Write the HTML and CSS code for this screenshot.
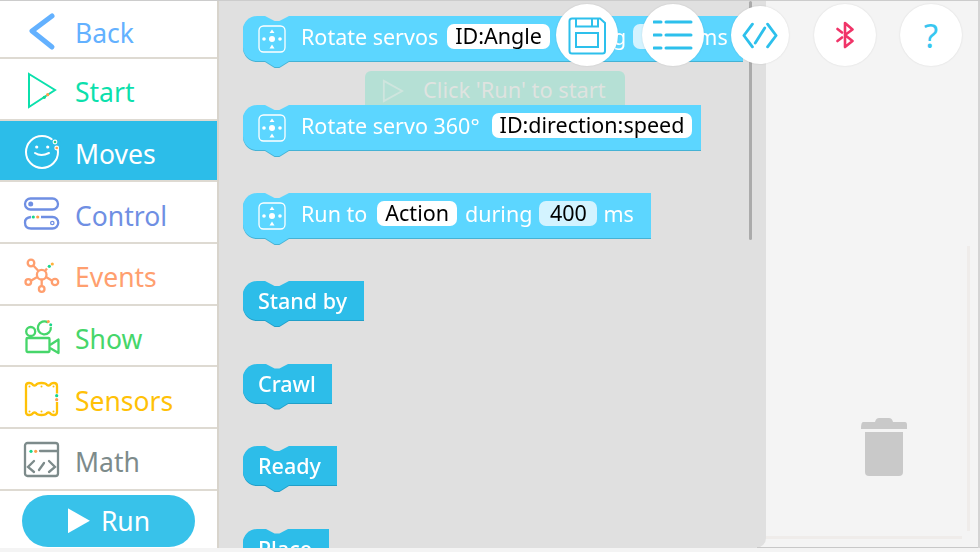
FILE: index.html
```html
<!DOCTYPE html>
<html lang="en">
<head>
  <meta charset="UTF-8" />
  <title>Blocks</title>
  <link rel="stylesheet" href="styles.css">
</head>
<body>

<div class="app">
  <nav class="sidebar">
    <a class="nav-item nav-back">
      <svg class="nav-icon" viewBox="0 0 40 40"><path d="M30 5 L10 20 L30 36" fill="none" stroke="currentColor" stroke-width="5" stroke-linecap="round" stroke-linejoin="round"/></svg>
      <span class="nav-label">Back</span>
    </a>
    <a class="nav-item nav-start">
      <svg class="nav-icon" viewBox="0 0 40 40"><path d="M7 4 L33 20 L7 37 Z" fill="none" stroke="currentColor" stroke-width="2"/><circle cx="22.3" cy="27.3" r="1.6" fill="#19d68c"/><circle cx="25.7" cy="24.7" r="1.6" fill="#ff9f4a"/></svg>
      <span class="nav-label">Start</span>
    </a>
    <a class="nav-item nav-moves">
      <svg class="nav-icon" viewBox="0 0 40 40"><circle cx="20" cy="20" r="16" fill="none" stroke="#fff" stroke-width="2"/><circle cx="14.7" cy="15" r="1.6" fill="#fff"/><circle cx="25.7" cy="15" r="1.6" fill="#fff"/><path d="M13 21 Q19 25 27 21" fill="none" stroke="#fff" stroke-width="2" stroke-linecap="round"/><circle cx="33.5" cy="12" r="5.5" fill="#2cbde9"/><circle cx="33" cy="10" r="2.4" fill="#fff"/><circle cx="33" cy="10" r="1.3" fill="#2fd08a"/><circle cx="34.7" cy="16" r="2.4" fill="#fff"/><circle cx="34.7" cy="16" r="1.3" fill="#ff9f4a"/></svg>
      <span class="nav-label">Moves</span>
    </a>
    <a class="nav-item nav-control">
      <svg class="nav-icon" viewBox="0 0 40 40"><rect x="3" y="4.5" width="33" height="11" rx="5.5" fill="none" stroke="currentColor" stroke-width="2.3"/><circle cx="8.7" cy="10" r="2.5" fill="currentColor"/><path d="M9 23 Q3 23.5 3 28.5 Q3 34.5 9 34.5 H30.5 A5.7 5.7 0 0 0 30.5 23 H19" fill="none" stroke="currentColor" stroke-width="2.3"/><circle cx="30.3" cy="29" r="1.7" fill="none" stroke="currentColor" stroke-width="1.3"/><circle cx="11.3" cy="23" r="1.6" fill="#19d68c"/><circle cx="15.7" cy="23" r="1.6" fill="#ff9f4a"/></svg>
      <span class="nav-label">Control</span>
    </a>
    <a class="nav-item nav-events">
      <svg class="nav-icon" viewBox="0 0 40 40"><g fill="none" stroke="currentColor" stroke-width="2.3"><circle cx="19.7" cy="19.7" r="4.8"/><circle cx="9" cy="8" r="3.3"/><circle cx="6.3" cy="27" r="2.8"/><circle cx="33" cy="27" r="3.2"/><circle cx="19.7" cy="34" r="2.8"/><path d="M11.3 10.5 L16.5 16 M8.8 25.8 L15.3 22 M24 22 L30.2 25.8 M19.7 24.5 V31.2 M23 16 L25 13.5"/></g><circle cx="27.3" cy="11.3" r="1.6" fill="#19d68c"/><circle cx="30.3" cy="9" r="1.6" fill="#ffb13d"/></svg>
      <span class="nav-label">Events</span>
    </a>
    <a class="nav-item nav-show">
      <svg class="nav-icon" viewBox="0 0 40 40"><g fill="none" stroke="currentColor" stroke-width="2.3" stroke-linejoin="round"><rect x="4.5" y="21" width="23" height="14" rx="1"/><path d="M28 28 L36.5 22.5 V36 L28 31"/><circle cx="8.7" cy="14.5" r="4.5"/><path d="M26 5.5 A6.5 6.5 0 1 0 28.8 10"/></g><circle cx="26.3" cy="4.5" r="1.5" fill="#ff9f4a"/><circle cx="28.7" cy="7.7" r="1.5" fill="#19d68c"/></svg>
      <span class="nav-label">Show</span>
    </a>
    <a class="nav-item nav-sensors">
      <svg class="nav-icon" viewBox="0 0 40 40"><path d="M4 7 Q4 4 7 4 Q10 4 11 6 Q12.5 7 14 6 Q15 4 19.5 4 Q24 4 25 6 Q26.5 7 28 6 Q29 4 32 4 Q35 4 35 7 V33 Q35 36 32 36 Q29 36 28 34 Q26.5 33 25 34 Q24 36 19.5 36 Q15 36 14 34 Q12.5 33 11 34 Q10 36 7 36 Q4 36 4 33 Z" fill="none" stroke="currentColor" stroke-width="2.3"/><g fill="currentColor"><circle cx="7.5" cy="7.5" r="1"/><circle cx="19.5" cy="7.5" r="1"/><circle cx="31.5" cy="7.5" r="1"/><circle cx="7.5" cy="32.5" r="1"/><circle cx="19.5" cy="32.5" r="1"/><circle cx="31.5" cy="32.5" r="1"/></g><rect x="33" y="14.5" width="4" height="8.5" fill="#fff"/><circle cx="34.7" cy="16.7" r="1.6" fill="#19d68c"/><circle cx="34.7" cy="20.7" r="1.6" fill="#ff9f4a"/></svg>
      <span class="nav-label">Sensors</span>
    </a>
    <a class="nav-item nav-math">
      <svg class="nav-icon" viewBox="0 0 40 40"><g fill="none" stroke="currentColor" stroke-width="2.3" stroke-linecap="round"><rect x="3" y="3" width="33" height="33" rx="2.5"/><path d="M18 11 H36 M12 21 L6 27 L12 32 M27 21 L33 27 L27 32 M17 30 L22 23"/></g><circle cx="9" cy="11.3" r="1.6" fill="#19d68c"/><circle cx="13.7" cy="11.3" r="1.6" fill="#ff9f4a"/></svg>
      <span class="nav-label">Math</span>
    </a>
    <div class="run-wrap">
      <button class="run-btn"><span class="run-arrow"></span>Run</button>
    </div>
  </nav>

  <main class="stage">
    <section class="flyout">
      <div class="hint">
        <svg class="hint-icon" viewBox="0 0 24 26"><path d="M2 2 L22 13 L2 24 Z" fill="none" stroke="#cfe5de" stroke-width="2"/></svg>
        Click 'Run' to start
      </div>
      <div class="scrollbar"></div>

      <div class="block block-light block-first">
        <svg class="block-icon" viewBox="0 0 28 28"><use href="#move-icon"/></svg>
        <span>Rotate servos</span>
        <span class="field">ID:Angle</span>
        <span>during</span>
        <span class="field field-num">400</span>
        <span>ms</span>
      </div>
      <div class="block block-light block-second">
        <svg class="block-icon" viewBox="0 0 28 28"><use href="#move-icon"/></svg>
        <span class="label-wide">Rotate servo 360°</span>
        <span class="field">ID:direction:speed</span>
      </div>
      <div class="block block-light block-third">
        <svg class="block-icon" viewBox="0 0 28 28"><use href="#move-icon"/></svg>
        <span class="label-run">Run to</span>
        <span class="field field-action">Action</span>
        <span>during</span>
        <span class="field field-num">400</span>
        <span>ms</span>
      </div>
      <div class="block block-dark block-standby">Stand by</div>
      <div class="block block-dark block-crawl">Crawl</div>
      <div class="block block-dark block-ready">Ready</div>
      <div class="block block-dark block-place">Place</div>
    </section>

    <div class="toolbar">
      <button class="tool-btn">
        <svg viewBox="0 0 40 40" width="40" height="40"><g fill="none" stroke="#2dc0ec" stroke-width="2"><path d="M5 3.5 H33 L38 8 V36 Q38 38.5 35.5 38.5 H5 Q2.5 38.5 2.5 36 V6 Q2.5 3.5 5 3.5 Z"/><path d="M9 3.5 V11.5 H31 V3.5 M9 18 H31 V32 H9 Z M25 4 V11"/></g></svg>
      </button>
      <button class="tool-btn">
        <svg viewBox="0 0 40 32" width="40" height="32"><path d="M1 3 H8 M13 3 H38 M1 16 H8 M13 16 H38 M1 29 H8 M13 29 H38" fill="none" stroke="#2dc0ec" stroke-width="3" stroke-linecap="round"/></svg>
      </button>
      <button class="tool-btn tool-small">
        <svg viewBox="0 0 38 28" width="36" height="27"><path d="M11 2 L2 14 L11 26 M27 2 L36 14 L27 26 M14 22 L24 6" fill="none" stroke="#2dc0ec" stroke-width="3" stroke-linecap="round" stroke-linejoin="round"/></svg>
      </button>
      <button class="tool-btn">
        <svg viewBox="0 0 18 28" width="18" height="28"><path d="M9 2 L16.5 8.5 L9 14 L16.5 20 L9 26 Z" fill="none" stroke="#f03468" stroke-width="2.6" stroke-linejoin="round"/><path d="M1.5 8 L6 11.5 M1.5 20 L6 16.5" fill="none" stroke="#f03468" stroke-width="2.6" stroke-linecap="round"/></svg>
      </button>
      <button class="tool-btn tool-help">?</button>
    </div>

    <svg class="trash" viewBox="0 0 46 58" width="46" height="58"><path d="M0 11 Q0 4 2 4 H14 Q15 0 18 0 H28 Q31 0 32 4 H44 Q46 4 46 7 V11 Z" fill="#c9c9c9"/><path d="M4 14 H42 V54 Q42 58 38 58 H8 Q4 58 4 54 Z" fill="#c9c9c9"/></svg>
    <div class="track-v"></div>
    <div class="track-h"></div>
  </main>
</div>

<svg class="defs" width="0" height="0">
  <symbol id="move-icon" viewBox="0 0 28 28">
    <rect x="1" y="1" width="26" height="26" rx="4.5" fill="none" stroke="#fff" stroke-width="1.3"/>
    <circle cx="14" cy="14" r="3" fill="#fff"/>
    <circle cx="6" cy="14" r="1.8" fill="#fff"/>
    <circle cx="22" cy="14" r="1.8" fill="#fff"/>
    <path d="M14 4.5 L16.5 8 H11.5 Z M14 19.5 L16.5 23.5 H11.5 Z" fill="#fff"/>
  </symbol>
</svg>

</body>
</html>
```

FILE: styles.css
```css
* {
  box-sizing: border-box;
}

body {
  margin: 0;
  font-family: "Noto Sans", "Open Sans", sans-serif;
  background: #f4f4f4;
  overflow: hidden;
}

.defs {
  display: block;
}

.app {
  display: flex;
  width: 980px;
  height: 548px;
  overflow: hidden;
  border-top: 1px solid #cccccc;
}

.sidebar {
  width: 219px;
  flex: none;
  background: white;
  border-right: 2px solid #d8d4cc;
}

.nav-item {
  display: flex;
  align-items: center;
  height: 61.7px;
  padding: 3px 0 0 22px;
  font-size: 26.5px;
  border-bottom: 2px solid #dedad2;
}

.nav-back { height: 58px; color: #63b1ff; }
.nav-start { color: #0be0ac; }
.nav-moves { color: white; background: #2cbde9; }
.nav-control { color: #6f8fe3; }
.nav-events { color: #ff9f6f; }
.nav-show { color: #46d66a; }
.nav-sensors { color: #ffc107; }
.nav-math { color: #7d8b8b; }

.nav-icon {
  width: 40px;
  height: 40px;
  margin-right: 13px;
  flex: none;
}

.nav-label {
  padding-top: 4px;
}

.run-wrap {
  padding: 4px 0 0 22px;
}

.run-btn {
  display: flex;
  align-items: center;
  justify-content: center;
  width: 173px;
  height: 52px;
  border: none;
  border-radius: 26px;
  background: #38c2ea;
  color: white;
  font-family: inherit;
  font-size: 26.5px;
  padding: 0 0 0 1px;
}

.run-arrow {
  width: 22px;
  height: 25px;
  margin-right: 11px;
  background: white;
  clip-path: polygon(0 0, 100% 50%, 0 100%);
}

.stage {
  position: relative;
  flex: 1;
  height: 100%;
  border-right: 2px solid #d4d4d4;
}

/* thin frame line under the workspace, starts where the flyout corner ends */
.stage::after {
  content: "";
  position: absolute;
  left: 538px;
  right: 0;
  bottom: 0;
  height: 1px;
  background: #c8c8c8;
}

.flyout {
  position: relative;
  width: 547px;
  height: 100%;
  padding: 15px 0 0 24px;
  background: #e0e0e0;
  border-bottom-right-radius: 10px;
  overflow: hidden;
}

.hint {
  position: absolute;
  left: 146px;
  top: 70px;
  width: 260px;
  height: 50px;
  display: flex;
  align-items: flex-start;
  padding: 4px 0 0 17px;
  background: #b5e0d5;
  border-radius: 6px;
  color: #dfe3e0;
  font-size: 21.8px;
}

.hint-icon {
  width: 22px;
  height: 24px;
  margin: 4px 19px 0 0;
}

.scrollbar {
  position: absolute;
  left: 530px;
  top: 0;
  width: 3px;
  height: 239px;
  border-radius: 2px;
  background: #ababab;
}

.block {
  position: relative;
  display: flex;
  align-items: center;
  width: fit-content;
  color: white;
  font-size: 21.5px;
  white-space: nowrap;
  border-radius: 14px 0 0 14px;
  filter: drop-shadow(0.5px 1.5px 0 #45b2d4);
}

.block::before {
  content: "";
  position: absolute;
  left: 22px;
  top: 0;
  width: 24px;
  height: 5px;
  background: #e0e0e0;
  clip-path: polygon(0 0, 100% 0, 60% 100%, 40% 100%);
}

.block::after {
  content: "";
  position: absolute;
  left: 22px;
  bottom: -6px;
  width: 24px;
  height: 6px;
  clip-path: polygon(0 0, 100% 0, 60% 100%, 40% 100%);
}

.block-light {
  height: 45px;
  padding-left: 15px;
  background: #5cd6ff;
  margin-bottom: 43px;
}

.block-light::after { background: #5cd6ff; }

.block-light > span {
  flex: none;
  margin: 0 9px 5px 0;
}

.block-light > .field-num {
  margin-left: -2px;
  margin-right: 6px;
}

.block-light > .label-wide { margin-right: 12px; }
.block-light > .label-run { margin-right: 10px; }
.block-light > .field-action { margin-right: 8px; }

.block-icon {
  width: 28px;
  height: 28px;
  margin-right: 15px;
  flex: none;
}

.field {
  padding: 0 8px;
  height: 25px;
  line-height: 24px;
  border-radius: 7px;
  background: white;
  color: black;
}

.field-num {
  width: 58px;
  padding: 0;
  text-align: center;
  background: #d3f3ff;
}

.block-first { width: 500px; margin-bottom: 44px; }
.block-second { width: 458px; }
.block-third { width: 408px; }

.block-dark {
  height: 39px;
  padding-left: 15px;
  background: #2dbde9;
  font-weight: 500;
  margin-bottom: 43.5px;
  filter: drop-shadow(0.5px 1.5px 0 #219fc8);
}

.block-dark::after { background: #2dbde9; }

.block-standby { width: 121px; }
.block-crawl { width: 89px; }
.block-ready { width: 94px; }
.block-place { width: 86px; }

.toolbar {
  position: absolute;
  top: 3px;
  left: 337px;
  display: flex;
  align-items: center;
  gap: 24px;
}

.tool-btn {
  display: flex;
  align-items: center;
  justify-content: center;
  width: 62px;
  height: 62px;
  padding: 0;
  border: none;
  border-radius: 50%;
  background: white;
  box-shadow: 0 0 2px rgba(0, 0, 0, 0.12);
}

.tool-small {
  width: 58px;
  height: 58px;
  margin: 0 1px 0 3px;
}

.tool-help {
  font-family: inherit;
  font-size: 33px;
  color: #38c6f0;
}

.trash {
  position: absolute;
  left: 642px;
  top: 417px;
}

.track-v {
  position: absolute;
  left: 748px;
  top: 245px;
  width: 3px;
  height: 285px;
  background: #efecea;
}

.track-h {
  position: absolute;
  left: 547px;
  top: 535px;
  width: 196px;
  height: 3px;
  background: #efecea;
}
```
